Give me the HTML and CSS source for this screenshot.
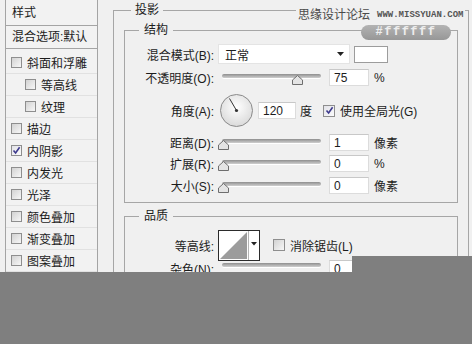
FILE: index.html
```html
<!DOCTYPE html>
<html lang="zh-CN">
<head>
    <meta charset="UTF-8">
    <title>图层样式 - 投影</title>
    <link rel="stylesheet" href="styles.css">
</head>
<body>
    <div class="dialog">
        <div class="styles-panel">
            <div class="panel-head">样式</div>
            <div class="panel-blend">混合选项:默认</div>
            <ul class="effect-list">
                <li class="effect"><span class="check"></span>斜面和浮雕</li>
                <li class="effect sub"><span class="check"></span>等高线</li>
                <li class="effect sub"><span class="check"></span>纹理</li>
                <li class="effect"><span class="check"></span>描边</li>
                <li class="effect"><span class="check checked"><svg width="9" height="9" viewBox="0 0 9 9"><path d="M1.5 4.5 L3.6 7 L7.6 1.2" fill="none" stroke="#3d3a8c" stroke-width="1.6"/></svg></span>内阴影</li>
                <li class="effect"><span class="check"></span>内发光</li>
                <li class="effect"><span class="check"></span>光泽</li>
                <li class="effect"><span class="check"></span>颜色叠加</li>
                <li class="effect"><span class="check"></span>渐变叠加</li>
                <li class="effect"><span class="check"></span>图案叠加</li>
            </ul>
        </div>

        <div class="main">
            <fieldset class="group outer">
                <legend>投影</legend>

                <fieldset class="group inner structure">
                    <legend>结构</legend>

                    <div class="row">
                        <label class="row-label">混合模式(B):</label>
                        <div class="select">
                            <span>正常</span>
                            <svg class="select-arrow" width="7" height="4" viewBox="0 0 7 4"><path d="M0 0 H7 L3.5 4 Z" fill="#222"/></svg>
                        </div>
                        <div class="swatch"></div>
                    </div>

                    <div class="row row-opacity">
                        <label class="row-label">不透明度(O):</label>
                        <div class="slider">
                            <div class="track"></div>
                            <svg class="thumb" style="left: 74px" width="11" height="10" viewBox="0 0 11 10"><path d="M5.5 0.5 L10.5 5 V9.5 H0.5 V5 Z" fill="#e4e4e4" stroke="#6e6e6e"/></svg>
                        </div>
                        <div class="field">75</div>
                        <span class="unit">%</span>
                    </div>

                    <div class="row row-angle">
                        <label class="row-label">角度(A):</label>
                        <svg class="dial" width="33" height="33" viewBox="0 0 33 33">
                            <defs>
                                <radialGradient id="dialFill" cx="50%" cy="40%" r="60%">
                                    <stop offset="0" stop-color="#ffffff"/>
                                    <stop offset="1" stop-color="#dadada"/>
                                </radialGradient>
                            </defs>
                            <circle cx="16.5" cy="16.5" r="16" fill="url(#dialFill)" stroke="#8a8a8a"/>
                            <line x1="16.5" y1="16.5" x2="9.5" y2="4.5" stroke="#333" stroke-width="1"/>
                            <circle cx="16.5" cy="16.5" r="1.6" fill="#333"/>
                        </svg>
                        <div class="field field-angle">120</div>
                        <span class="unit unit-deg">度</span>
                        <span class="check checked check-global"><svg width="9" height="9" viewBox="0 0 9 9"><path d="M1.5 4.5 L3.6 7 L7.6 1.2" fill="none" stroke="#3d3a8c" stroke-width="1.6"/></svg></span>
                        <span class="check-text">使用全局光(G)</span>
                    </div>

                    <div class="row row-distance">
                        <label class="row-label">距离(D):</label>
                        <div class="slider">
                            <div class="track"></div>
                            <svg class="thumb" style="left: 0px" width="11" height="10" viewBox="0 0 11 10"><path d="M5.5 0.5 L10.5 5 V9.5 H0.5 V5 Z" fill="#e4e4e4" stroke="#6e6e6e"/></svg>
                        </div>
                        <div class="field">1</div>
                        <span class="unit">像素</span>
                    </div>

                    <div class="row row-spread">
                        <label class="row-label">扩展(R):</label>
                        <div class="slider">
                            <div class="track"></div>
                            <svg class="thumb" style="left: 0px" width="11" height="10" viewBox="0 0 11 10"><path d="M5.5 0.5 L10.5 5 V9.5 H0.5 V5 Z" fill="#e4e4e4" stroke="#6e6e6e"/></svg>
                        </div>
                        <div class="field">0</div>
                        <span class="unit">%</span>
                    </div>

                    <div class="row row-size">
                        <label class="row-label">大小(S):</label>
                        <div class="slider">
                            <div class="track"></div>
                            <svg class="thumb" style="left: 0px" width="11" height="10" viewBox="0 0 11 10"><path d="M5.5 0.5 L10.5 5 V9.5 H0.5 V5 Z" fill="#e4e4e4" stroke="#6e6e6e"/></svg>
                        </div>
                        <div class="field">0</div>
                        <span class="unit">像素</span>
                    </div>
                </fieldset>

                <fieldset class="group inner quality">
                    <legend>品质</legend>

                    <div class="row row-contour">
                        <label class="row-label">等高线:</label>
                        <svg class="contour" width="42" height="31" viewBox="0 0 42 31">
                            <rect x="0.5" y="0.5" width="41" height="30" fill="#fff" stroke="#2b2b2b"/>
                            <path d="M2 29 L29 2 V29 Z" fill="#9c9c9c"/>
                            <line x1="30.5" y1="1" x2="30.5" y2="30" stroke="#b5b5b5"/>
                            <path d="M33 12 H39 L36 15.5 Z" fill="#222"/>
                        </svg>
                        <span class="check check-aa"></span>
                        <span class="check-text">消除锯齿(L)</span>
                    </div>

                    <div class="row row-noise">
                        <label class="row-label">杂色(N):</label>
                        <div class="slider">
                            <div class="track"></div>
                        </div>
                        <div class="field">0</div>
                        <span class="unit">%</span>
                    </div>
                </fieldset>
            </fieldset>
        </div>
    </div>

    <div class="watermark">
        <span class="wm-name">思缘设计论坛</span>
        <span class="wm-url">WWW.MISSYUAN.COM</span>
    </div>
    <div class="color-pill">#ffffff</div>

    <div class="cover cover-bottom"></div>
    <div class="cover cover-right"></div>
</body>
</html>
```

FILE: styles.css
```css
body {
    margin: 0;
    width: 472px;
    height: 344px;
    overflow: hidden;
    position: relative;
    background-color: #f0f0f0;
    font-family: "Liberation Sans", "Noto Sans CJK SC", sans-serif;
    font-size: 12px;
    color: #1c1c1c;
}
.dialog {
    display: flex;
    align-items: flex-start;
}

/* left list of styles */
.styles-panel {
    margin-left: 5px;
    width: 93px;
    height: 300px;
    box-sizing: border-box;
    border: 1px solid #a4a4a4;
    border-top: 0;
    background-color: #f2f2f2;
}
.panel-head {
    height: 25px;
    line-height: 27px;
    padding-left: 6px;
    border-bottom: 1px solid #a4a4a4;
}
.panel-blend {
    height: 22px;
    line-height: 23px;
    padding-left: 6px;
    border-bottom: 1px solid #a4a4a4;
}
.effect-list {
    list-style: none;
    margin: 0;
    padding: 3px 0 0;
}
.effect {
    height: 21px;
    display: flex;
    align-items: center;
    gap: 5px;
    padding-left: 5px;
    border-bottom: 1px solid #e1e1e1;
}
.effect.sub {
    padding-left: 19px;
}
.check {
    width: 11px;
    height: 11px;
    box-sizing: border-box;
    border: 1px solid #8e8e8e;
    background: linear-gradient(135deg, #d2d2d2, #f7f7f7);
    display: flex;
    align-items: center;
    justify-content: center;
    flex-shrink: 0;
}
.check.checked {
    background: linear-gradient(135deg, #e2e2e8, #fbfbfb);
}

/* right side groups */
.main {
    margin-left: 15px;
    width: 356px;
}
.group {
    margin: 0;
    border: 1px solid #a6a6a6;
    min-inline-size: auto;
}
.group legend {
    line-height: 17px;
    padding: 0 5px;
}
.outer {
    margin-top: 2px;
    padding: 3px 10px 0 10px;
    box-sizing: border-box;
    height: 342px;
}
.outer > legend {
    margin-left: 7px;
    padding: 0 4px;
}
.inner {
    padding: 5px 0 8px 0;
}
.inner > legend {
    margin-left: 14px;
}
.quality {
    margin-top: 5px;
    padding-top: 10px;
}

.row {
    display: flex;
    align-items: center;
    height: 17px;
}
.row-label {
    width: 89px;
    text-align: right;
    margin-right: 4px;
    flex-shrink: 0;
}
.row:first-of-type {
    height: 20px;
}
.row-opacity { margin-top: 5px; }
.row-angle { margin-top: 8px; height: 33px; }
.row-distance { margin-top: 7px; }
.row-spread { margin-top: 4px; }
.row-size { margin-top: 5px; }
.row-contour { height: 31px; }
.row-noise { margin-top: 5px; }

.select {
    width: 132px;
    height: 20px;
    box-sizing: border-box;
    background-color: #fff;
    border: 1px solid #e4e4e4;
    display: flex;
    align-items: center;
    justify-content: space-between;
    padding: 0 5px 0 6px;
}
.swatch {
    width: 34px;
    height: 17px;
    box-sizing: border-box;
    margin-left: 4px;
    background-color: #fff;
    border: 1px solid #9c9c9c;
}

.slider {
    position: relative;
    width: 104px;
    height: 17px;
    flex-shrink: 0;
}
.track {
    margin: 5px 0 0 4px;
    width: 99px;
    height: 4px;
    border-radius: 2px;
    background: linear-gradient(#8e8e8e, #cfcfcf);
    box-shadow: 0 1px 0 #fff;
}
.row-noise .track {
    margin-top: 3px;
}
.thumb {
    position: absolute;
    top: 6px;
}

.field {
    width: 40px;
    height: 17px;
    box-sizing: border-box;
    margin-left: 7px;
    padding-left: 4px;
    line-height: 16px;
    background-color: #fff;
    border: 1px solid #dcdcdc;
    border-top-color: #c8c8c8;
    flex-shrink: 0;
}
.unit {
    margin-left: 5px;
}

.dial {
    margin-left: 2px;
    flex-shrink: 0;
}
.field-angle {
    width: 38px;
    margin-left: 5px;
}
.unit-deg {
    margin-left: 4px;
}
.check-global {
    margin-left: 11px;
    width: 12px;
    height: 12px;
}
.check-text {
    margin-left: 5px;
    white-space: nowrap;
}

.contour {
    flex-shrink: 0;
}
.check-aa {
    margin-left: 13px;
    width: 12px;
    height: 12px;
}

/* watermark over the dialog */
.watermark {
    position: absolute;
    left: 296px;
    top: 7px;
    padding: 0 2px;
    background-color: #f0f0f0;
    display: flex;
    align-items: center;
    gap: 7px;
    color: #4a4a4a;
    line-height: 16px;
}
.wm-url {
    font-family: "Liberation Mono", monospace;
    font-size: 9px;
    font-weight: bold;
    color: #555;
}
.color-pill {
    position: absolute;
    left: 361px;
    top: 25px;
    width: 90px;
    height: 15px;
    border-radius: 8px;
    background: linear-gradient(#b3b3b3, #979797);
    color: #eeeeee;
    font-family: "Liberation Mono", monospace;
    font-weight: bold;
    font-size: 12px;
    letter-spacing: 1.5px;
    line-height: 15px;
    text-align: center;
}

.cover {
    position: absolute;
    background-color: #7f7f7f;
}
.cover-bottom {
    left: 0;
    top: 272px;
    width: 472px;
    height: 72px;
}
.cover-right {
    left: 352px;
    top: 256px;
    width: 120px;
    height: 88px;
}
```
